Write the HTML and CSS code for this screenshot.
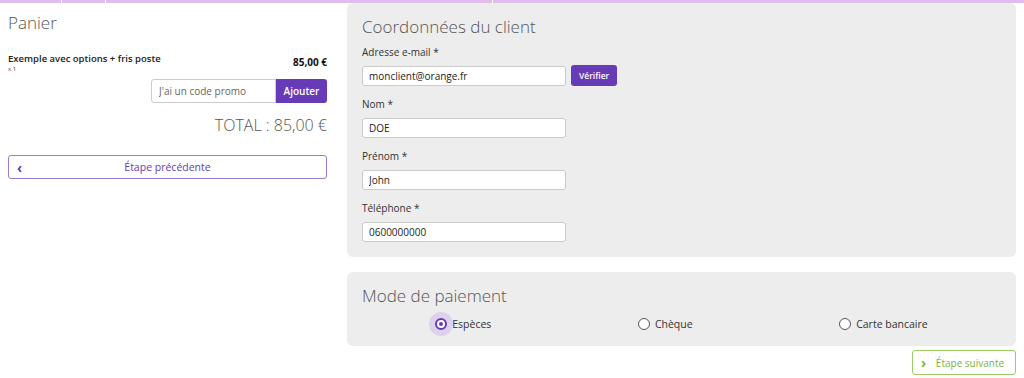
FILE: index.html
```html
<!DOCTYPE html>
<html lang="fr">
<head>
  <meta charset="UTF-8" />
  <meta name="viewport" content="width=device-width, initial-scale=1.0" />
  <title>Commande</title>
  <link rel="stylesheet" href="styles.css">
</head>
<body>
  <div class="steps">
    <div class="step" style="width:61px"></div>
    <div class="step" style="width:43px"></div>
    <div class="step" style="width:386px"></div>
    <div class="step step-last"></div>
  </div>
  <div class="page">
    <div class="cart">
      <h2 class="cart-title">Panier</h2>
      <div class="cart-line">
        <div>
          <div class="item-name">Exemple avec options + fris poste</div>
          <div class="item-qty">x 1</div>
        </div>
        <div class="item-price">85,00 €</div>
      </div>
      <div class="promo">
        <input class="promo-input" type="text" placeholder="J'ai un code promo">
        <button class="btn-purple promo-btn">Ajouter</button>
      </div>
      <div class="total">TOTAL : 85,00 €</div>
      <button class="btn-prev"><span class="chev">&lsaquo;</span>Étape précédente</button>
    </div>

    <div class="forms">
      <div class="card">
        <h2 class="card-title">Coordonnées du client</h2>
        <label class="field-label">Adresse e-mail *</label>
        <div class="field-row">
          <input class="field" type="text" value="monclient@orange.fr">
          <button class="btn-purple verify-btn">Vérifier</button>
        </div>
        <label class="field-label">Nom *</label>
        <input class="field" type="text" value="DOE">
        <label class="field-label">Prénom *</label>
        <input class="field" type="text" value="John">
        <label class="field-label">Téléphone *</label>
        <input class="field" type="text" value="0600000000">
      </div>

      <div class="card card-pay">
        <h2 class="card-title">Mode de paiement</h2>
        <div class="pay-options">
          <label class="pay-option"><span class="radio checked"></span>Espèces</label>
          <label class="pay-option"><span class="radio"></span>Chèque</label>
          <label class="pay-option"><span class="radio"></span>Carte bancaire</label>
        </div>
      </div>

      <div class="next-row">
        <button class="btn-next"><span class="chev">&rsaquo;</span>Étape suivante</button>
      </div>
    </div>
  </div>
</body>
</html>
```

FILE: styles.css
```css
body {
  margin: 0;
  font-family: "Open Sans", "Liberation Sans", sans-serif;
  color: #333;
  background: #fff;
}
.steps {
  display: flex;
  gap: 1px;
  height: 3px;
}
.step {
  background: #e2bdeb;
}
.step-last {
  flex: 1;
}
.page {
  display: flex;
  gap: 20px;
  padding: 0 8px;
}
.cart {
  width: 319px;
  display: flex;
  flex-direction: column;
}
.cart-title {
  margin: 10px 0 0;
  font-size: 17px;
  font-weight: 300;
  color: #555;
  line-height: 20px;
}
.cart-line {
  display: flex;
  justify-content: space-between;
  align-items: flex-start;
  margin-top: 20px;
}
.item-name {
  font-size: 9.5px;
  font-weight: 600;
  color: #222;
  line-height: 12px;
}
.item-qty {
  font-size: 6px;
  color: #444;
  line-height: 8px;
}
.item-price {
  font-size: 10px;
  font-weight: 700;
  color: #111;
  margin-top: 2px;
}
.promo {
  display: flex;
  justify-content: flex-end;
  margin-top: 6px;
}
.promo-input {
  width: 125px;
  height: 24px;
  box-sizing: border-box;
  border: 1px solid #ccc;
  border-radius: 3px 0 0 3px;
  padding: 0 7px;
  font-family: inherit;
  font-size: 10px;
}
.promo-input::placeholder {
  color: #666;
}
.btn-purple {
  background: #673ab7;
  color: #fff;
  border: none;
  font-family: inherit;
  font-weight: 600;
  cursor: pointer;
}
.promo-btn {
  width: 51px;
  height: 24px;
  font-size: 10px;
  border-radius: 0 3px 3px 0;
}
.total {
  text-align: right;
  font-size: 16px;
  font-weight: 300;
  color: #555;
  margin-top: 11px;
}
.btn-prev {
  position: relative;
  margin-top: 19px;
  height: 24px;
  border: 1px solid #9a7bd3;
  border-radius: 3px;
  background: #fff;
  color: #673ab7;
  font-family: inherit;
  font-size: 10.5px;
  font-weight: 500;
  cursor: pointer;
}
.chev {
  position: absolute;
  left: 8px;
  top: 2px;
  font-size: 14px;
  font-weight: 700;
}
.forms {
  flex: 1;
  display: flex;
  flex-direction: column;
}
.card {
  background: #ededed;
  border-radius: 6px;
  padding: 13px 15px 15px;
  display: flex;
  flex-direction: column;
  align-items: flex-start;
}
.card-title {
  margin: 0;
  font-size: 17px;
  font-weight: 300;
  color: #555;
  line-height: 22px;
}
.field-label {
  font-size: 10px;
  line-height: 14px;
  color: #333;
  margin-top: 11px;
  margin-bottom: 7px;
}
.card-title + .field-label {
  margin-top: 7px;
}
.field-row {
  display: flex;
  align-items: flex-start;
  gap: 5px;
}
.field {
  width: 204px;
  height: 20px;
  box-sizing: border-box;
  border: 1px solid #ccc;
  border-radius: 3px;
  background: #fff;
  padding: 0 6px;
  font-family: inherit;
  font-size: 10px;
  color: #222;
}
.verify-btn {
  height: 21px;
  margin-top: -1px;
  padding: 0 8px;
  font-size: 8.5px;
  border-radius: 3px;
}
.card-pay {
  margin-top: 15px;
  padding-bottom: 12px;
  align-items: stretch;
}
.pay-options {
  display: flex;
  justify-content: space-around;
  margin-top: 7px;
}
.pay-option {
  display: flex;
  align-items: center;
  gap: 5px;
  font-size: 10.5px;
  color: #333;
  height: 20px;
}
.radio {
  width: 12px;
  height: 12px;
  border: 1px solid #555;
  border-radius: 50%;
  box-sizing: border-box;
  background: #fff;
  position: relative;
}
.radio.checked {
  border: 2px solid #673ab7;
  box-shadow: 0 0 0 6px #ddd1ec;
}
.radio.checked::after {
  content: "";
  position: absolute;
  left: 2px;
  top: 2px;
  width: 4px;
  height: 4px;
  border-radius: 50%;
  background: #673ab7;
}
.next-row {
  display: flex;
  justify-content: flex-end;
  margin-top: 4px;
}
.btn-next {
  position: relative;
  width: 104px;
  height: 25px;
  border: 1px solid #9ccc65;
  border-radius: 3px;
  background: #fff;
  color: #7cb342;
  font-family: inherit;
  font-size: 10px;
  font-weight: 500;
  padding-left: 18px;
  cursor: pointer;
}
```
